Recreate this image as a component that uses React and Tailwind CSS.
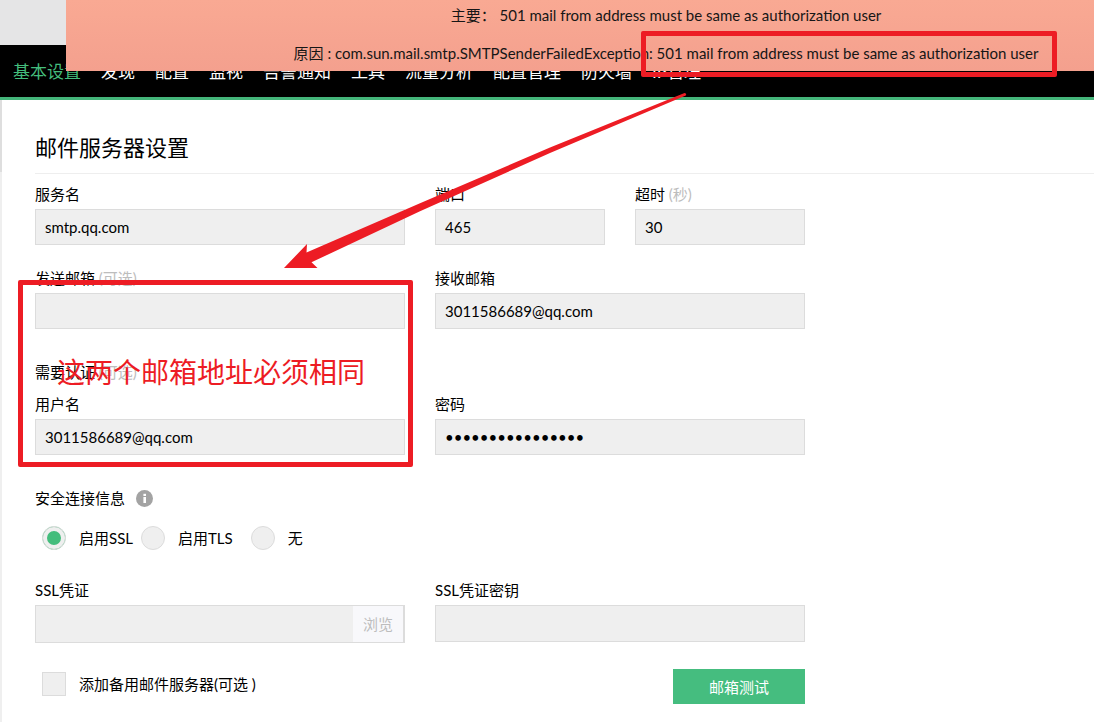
import { useState } from "react";

const NAV_ITEMS = ["基本设置", "发现", "配置", "监视", "告警通知", "工具", "流量分析", "配置管理", "防火墙", "IP管理"];

const LABEL = "mb-[5px] block text-[15px] leading-5";
const INPUT =
  "block h-9 w-full border border-[#dcdcdc] bg-[#efefef] px-[9px] text-[15px] text-black outline-none";
const TALL_INPUT =
  "block h-[37px] w-full border border-[#dcdcdc] bg-[#efefef] px-[9px] text-[15px] text-black outline-none";

function Field({ id, label, hint, type = "text", value = "", className = INPUT }) {
  const [text, setText] = useState(value);
  return (
    <div className="min-w-0">
      <label htmlFor={id} className={LABEL}>
        {label}
        {hint && <span className="text-[#bdbdbd]"> {hint}</span>}
      </label>
      <input id={id} type={type} value={text} onChange={(e) => setText(e.target.value)} className={className} />
    </div>
  );
}

function Security({ id, label, checked, onSelect }) {
  return (
    <label htmlFor={id} className="flex items-center gap-[13px]">
      <input
        id={id}
        type="radio"
        name="security"
        checked={checked}
        onChange={onSelect}
        className="size-6 appearance-none rounded-full border border-[#dcdcdc] bg-[#efefef] checked:bg-[#43bd7c] checked:shadow-[inset_0_0_0_4px_#efefef]"
      />
      {label}
    </label>
  );
}

function AlertBanner() {
  return (
    <div
      role="alert"
      className="absolute top-0 right-0 left-[66px] h-[71px] bg-linear-to-b from-[#f9a993] to-[#f4a08e] pt-[5px] pl-[172px] text-center text-[15px] leading-5 whitespace-nowrap text-[#161616]"
    >
      <p>主要： 501 mail from address must be same as authorization user</p>
      <p className="mt-[18px]">
        原因 : com.sun.mail.smtp.SMTPSenderFailedException: 501 mail from address must be same as authorization user
      </p>
    </div>
  );
}

function Annotations() {
  return (
    <div className="pointer-events-none">
      <div className="absolute top-[31px] left-[641px] h-[46px] w-[416px] rounded-xs border-[5px] border-[#ed1c24]" />
      <div className="absolute top-[280px] left-[18px] h-[187px] w-[395px] rounded-xs border-[5px] border-[#ed1c24]" />
      <svg className="absolute top-[90px] left-[280px]" width="410" height="182" viewBox="280 90 410 182" aria-hidden="true">
        <path d="M284 268 L307 244 L306.5 252.5 L420 203.3 L550 147.6 L684.5 93 Q687 93.3 685.8 95.6 L550 153 L420 211.2 L311.5 262.3 L317.5 268 Z" fill="#ed1c24" />
      </svg>
      <p className="absolute top-[352px] left-[57px] text-[28px] leading-10 whitespace-nowrap text-[#ed1c24]">
        这两个邮箱地址必须相同
      </p>
    </div>
  );
}

export default function App() {
  const [security, setSecurity] = useState("ssl");
  const [backup, setBackup] = useState(false);

  return (
    <div className="relative min-h-screen overflow-hidden bg-white font-[Lato,'Noto_Sans_CJK_SC',sans-serif] text-black">
      <header className="h-[45px] bg-[#e5e5e6]" />
      <nav className="flex h-[55px] items-center gap-5 border-b-[3px] border-[#44b57a] bg-black pt-[2px] pl-[13px] text-[17px] whitespace-nowrap text-white">
        {NAV_ITEMS.map((item, i) => (
          <a key={item} href="#" className={i === 0 ? "text-[#44bd7c]" : ""}>
            {item}
          </a>
        ))}
      </nav>

      <div className="flex">
        <div className="w-[2px] shrink-0 bg-[#efefef]">
          <div className="h-[72px] bg-[#dedede]" />
        </div>
        <main className="min-w-0 grow pb-[18px] pl-[33px]">
          <h1 className="border-b border-[#eeeeee] pt-8 pb-[9px] text-[22px] leading-8">邮件服务器设置</h1>

          <form className="max-w-[770px] pt-[10px] text-[15px] leading-5" onSubmit={(e) => e.preventDefault()}>
            <div className="grid grid-cols-2 gap-x-[30px] gap-y-[23px]">
              <Field id="server" label="服务名" value="smtp.qq.com" />
              <div className="grid grid-cols-2 gap-[30px]">
                <Field id="port" label="端口" value="465" />
                <Field id="timeout" label="超时" hint="(秒)" value="30" />
              </div>
              <Field id="from" label="发送邮箱" hint="(可选)" />
              <Field id="to" label="接收邮箱" value="3011586689@qq.com" />
            </div>

            <h2 className="mt-[33px]">
              需要认证 <span className="text-[#bdbdbd]">(可选)</span>
            </h2>
            <div className="mt-3 grid grid-cols-2 gap-x-[30px]">
              <Field id="user" label="用户名" value="3011586689@qq.com" />
              <Field id="password" label="密码" type="password" value="abcdefghijklmnop" />
            </div>

            <fieldset className="mt-[33px]">
              <legend className="flex items-center gap-[11px]">
                安全连接信息
                <svg width="17" height="17" viewBox="0 0 17 17" aria-hidden="true">
                  <circle cx="8.5" cy="8.5" r="8.5" fill="#a3a3a3" />
                  <rect x="7.4" y="3.8" width="2.6" height="2.2" fill="#fff" />
                  <rect x="7.4" y="7" width="2.6" height="6" fill="#fff" />
                </svg>
              </legend>
              <div className="mt-[18px] flex pl-[7px]">
                <Security id="ssl" label="启用SSL" checked={security === "ssl"} onSelect={() => setSecurity("ssl")} />
                <div className="ml-2 flex gap-[18px]">
                  <Security id="tls" label="启用TLS" checked={security === "tls"} onSelect={() => setSecurity("tls")} />
                  <Security id="none" label="无" checked={security === "none"} onSelect={() => setSecurity("none")} />
                </div>
              </div>
            </fieldset>

            <div className="mt-[30px] grid grid-cols-2 gap-x-[30px]">
              <div className="min-w-0">
                <label htmlFor="cert" className={LABEL}>
                  SSL凭证
                </label>
                <div className="flex h-[38px] border border-r-2 border-[#dcdcdc] bg-[#efefef]">
                  <input id="cert" type="text" className="min-w-0 grow px-[9px] outline-none" />
                  <button type="button" className="w-[50px] bg-[#f8f8fb] text-[#bdbdbd]">
                    浏览
                  </button>
                </div>
              </div>
              <Field id="key" label="SSL凭证密钥" className={TALL_INPUT} />
            </div>

            <div className="mt-[26px] flex items-start justify-between">
              <label htmlFor="backup" className="mt-[3px] flex items-center gap-[13px] pl-[7px]">
                <input
                  id="backup"
                  type="checkbox"
                  checked={backup}
                  onChange={(e) => setBackup(e.target.checked)}
                  className="size-6 appearance-none border border-[#dcdcdc] bg-[#efefef] checked:bg-[#43bd7c]"
                />
                添加备用邮件服务器(可选 )
              </label>
              <button type="submit" className="h-[35px] w-[132px] bg-[#45bd7f] text-white">
                邮箱测试
              </button>
            </div>
          </form>
        </main>
      </div>

      <AlertBanner />
      <Annotations />
    </div>
  );
}
